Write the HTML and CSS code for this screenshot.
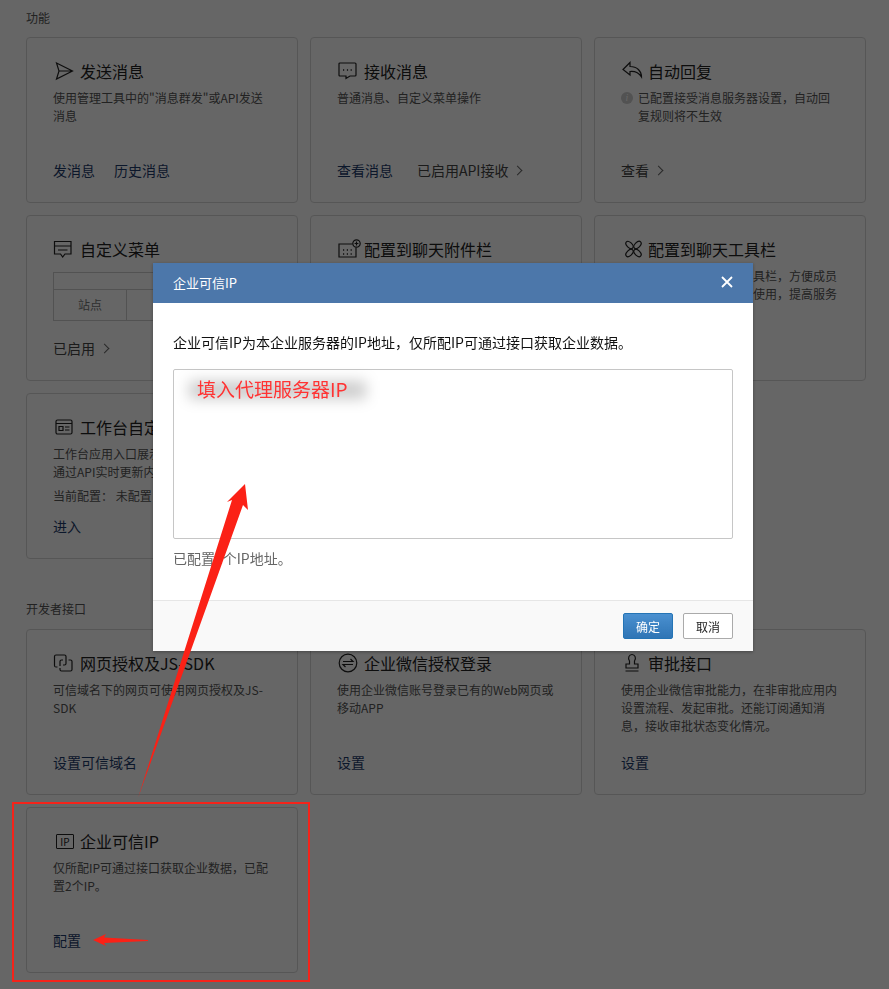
FILE: index.html
```html
<!DOCTYPE html>
<html lang="zh-CN">
<head>
    <meta charset="UTF-8">
    <meta name="viewport" content="width=device-width, initial-scale=1.0">
    <title>企业可信IP</title>
    <link rel="stylesheet" href="styles.css">
</head>
<body>
    <main class="page">
        <h3 class="section-title">功能</h3>
        <div class="card-grid">
            <section class="card">
                <h4 class="card-title">
                    <svg class="card-icon" viewBox="0 0 20 20"><path d="M2.5 2 L18.5 10 L2.5 18 L5 10 Z M5 10 H18.5"/></svg>
                    发送消息
                </h4>
                <p class="card-desc">使用管理工具中的"消息群发"或API发送消息</p>
                <div class="card-links"><a href="#">发消息</a><a href="#">历史消息</a></div>
            </section>
            <section class="card">
                <h4 class="card-title">
                    <svg class="card-icon" viewBox="0 0 20 20"><path d="M1 3 Q1 2 2 2 H17 Q18 2 18 3 V14 Q18 15 17 15 H12 L8 17.5 V15 H2 Q1 15 1 14 Z"/><path class="dots" d="M5 9 h1.2 M8.9 9 h1.2 M12.6 9 h1.2"/></svg>
                    接收消息
                </h4>
                <p class="card-desc">普通消息、自定义菜单操作</p>
                <div class="card-links wide"><a href="#">查看消息</a><a href="#" class="muted">已启用API接收<span class="chevron"></span></a></div>
            </section>
            <section class="card">
                <h4 class="card-title">
                    <svg class="card-icon" viewBox="0 0 20 20"><path d="M8 1.5 L1 8.5 L8 14 V10.5 C13 10 17 12 19.5 16 C19.5 10 15 5.5 8 5.5 Z"/></svg>
                    自动回复
                </h4>
                <p class="card-desc has-info"><i class="info">i</i>已配置接受消息服务器设置，自动回复规则将不生效</p>
                <div class="card-links"><a href="#" class="muted">查看<span class="chevron"></span></a></div>
            </section>

            <section class="card">
                <h4 class="card-title">
                    <svg class="card-icon" viewBox="0 0 20 20"><path d="M0.5 2.5 H17 V15 H11 L8.7 18 L6.5 15 H0.5 Z M0.5 7 H17 M4 11 H13.5"/></svg>
                    自定义菜单
                </h4>
                <div class="menu-preview">
                    <div class="menu-top"></div>
                    <div class="menu-row"><span>站点</span><span></span><span></span></div>
                </div>
                <div class="card-links"><a href="#" class="muted">已启用<span class="chevron"></span></a></div>
            </section>
            <section class="card">
                <h4 class="card-title">
                    <svg class="card-icon" viewBox="0 0 20 20"><path d="M14.5 5 H1 V18 H18 V8.5"/><circle cx="18.5" cy="4.5" r="3.7"/><path d="M16.6 4.5 H20.4 M18.5 2.6 V6.4"/><path class="dots" d="M5 11 h1.2 M8.8 11 h1.2 M12.6 11 h1.2 M5 15 h1.2 M8.8 15 h1.2 M12.6 15 h1.2"/></svg>
                    配置到聊天附件栏
                </h4>
            </section>
            <section class="card">
                <h4 class="card-title">
                    <svg class="card-icon" viewBox="0 0 20 20">
                        <ellipse cx="7.5" cy="6" rx="4.4" ry="2.6" transform="rotate(45 7.5 6)"/>
                        <ellipse cx="15.5" cy="6" rx="4.4" ry="2.6" transform="rotate(-45 15.5 6)"/>
                        <ellipse cx="7.5" cy="14" rx="4.4" ry="2.6" transform="rotate(-45 7.5 14)"/>
                        <ellipse cx="15.5" cy="14" rx="4.4" ry="2.6" transform="rotate(45 15.5 14)"/>
                    </svg>
                    配置到聊天工具栏
                </h4>
                <p class="card-desc">可以将应用配置到聊天工具栏，方便成员在聊天过程中快捷进入和使用，提高服务</p>
            </section>

            <section class="card">
                <h4 class="card-title">
                    <svg class="card-icon" viewBox="0 0 20 20"><rect x="2" y="3" width="16" height="14" rx="1.5"/><path d="M2 6.5 H18 M5 9.5 H9 V13.5 H5 Z M11 10 H15.5 M11 13 H15.5"/></svg>
                    工作台自定义展示
                </h4>
                <p class="card-desc">工作台应用入口展示应用的关键数据，可通过API实时更新内容</p>
                <p class="card-desc config-line">当前配置： 未配置</p>
                <div class="card-links"><a href="#">进入</a></div>
            </section>
        </div>

        <h3 class="section-title section-second">开发者接口</h3>
        <div class="card-grid">
            <section class="card">
                <h4 class="card-title">
                    <svg class="card-icon" viewBox="0 0 20 20"><path d="M3.5 14 H2 Q0.5 14 0.5 12.5 V3.5 Q0.5 2 2 2 H10.5 Q12 2 12 3.5 V10.5 Q12 12 10.5 12 H9"/><path d="M6 13 V8.5 Q6 7 7.5 7 H9 M14.5 7 H16.5 Q18 7 18 8.5 V16.5 Q18 18 16.5 18 H7.5 Q6 18 6 16.5 V15"/></svg>
                    网页授权及JS-SDK
                </h4>
                <p class="card-desc">可信域名下的网页可使用网页授权及JS-SDK</p>
                <div class="card-links"><a href="#">设置可信域名</a></div>
            </section>
            <section class="card">
                <h4 class="card-title">
                    <svg class="card-icon" viewBox="0 0 20 20"><circle cx="10" cy="10" r="8.8"/><path d="M5 8.5 H15 L12.5 6 M15 11.5 H5 L7.5 14"/></svg>
                    企业微信授权登录
                </h4>
                <p class="card-desc">使用企业微信账号登录已有的Web网页或移动APP</p>
                <div class="card-links"><a href="#">设置</a></div>
            </section>
            <section class="card">
                <h4 class="card-title">
                    <svg class="card-icon" viewBox="0 0 20 20"><path d="M7.5 11 V8 C5.5 5 7 1.5 10 1.5 C13 1.5 14.5 5 12.5 8 V11 H16 V15 H4 V11 Z M3.5 18 H16.5"/></svg>
                    审批接口
                </h4>
                <p class="card-desc">使用企业微信审批能力，在非审批应用内设置流程、发起审批。还能订阅通知消息，接收审批状态变化情况。</p>
                <div class="card-links"><a href="#">设置</a></div>
            </section>

            <section class="card">
                <h4 class="card-title">
                    <span class="ip-icon">IP</span>
                    企业可信IP
                </h4>
                <p class="card-desc">仅所配IP可通过接口获取企业数据，已配置2个IP。</p>
                <div class="card-links"><a href="#">配置</a></div>
            </section>
        </div>
    </main>

    <div class="mask"></div>

    <div class="dialog">
        <div class="dialog-header">
            <span>企业可信IP</span>
            <svg class="dialog-close" viewBox="0 0 12 12"><path d="M1 1 L11 11 M11 1 L1 11"/></svg>
        </div>
        <div class="dialog-body">
            <p class="dialog-intro">企业可信IP为本企业服务器的IP地址，仅所配IP可通过接口获取企业数据。</p>
            <div class="ip-input"><span class="ip-note">填入代理服务器IP</span></div>
            <p class="dialog-count">已配置2个IP地址。</p>
        </div>
        <div class="dialog-footer">
            <button class="btn btn-primary">确定</button>
            <button class="btn">取消</button>
        </div>
    </div>

    <!-- red annotations drawn on top of the screenshot -->
    <div class="mark-box"></div>
    <svg class="marks" viewBox="0 0 889 989">
        <polygon points="245,484 248,510 243,505 138,798 232,500 227,502"/>
        <polygon points="93,940 106,934 104,937.5 148,940 148,941 104,943 106,946"/>
    </svg>
</body>
</html>
```

FILE: styles.css
```css
* {
    margin: 0;
    padding: 0;
    box-sizing: border-box;
}

body {
    background-color: #fff;
    font-family: "Noto Sans CJK SC", "Liberation Sans", sans-serif;
    font-size: 12px;
    color: #333;
    height: 989px;
    overflow: hidden;
}

.page {
    padding: 9px 23px 0 26px;
}

.section-title {
    font-size: 12px;
    font-weight: normal;
    line-height: 18px;
    color: #555;
    margin-bottom: 10px;
}

.section-second {
    margin-top: 41px;
    margin-bottom: 11px;
}

.card-grid {
    display: grid;
    grid-template-columns: repeat(3, 272px);
    grid-auto-rows: 166px;
    gap: 12px;
}

.card {
    border: 1px solid #d8d8d8;
    border-radius: 4px;
    padding: 22px 26px 0;
    position: relative;
}

.card-title {
    display: flex;
    align-items: center;
    font-size: 16px;
    font-weight: normal;
    line-height: 22px;
    color: #222;
    gap: 6px;
    margin-bottom: 7px;
}

.card-icon {
    width: 20px;
    height: 20px;
    margin-left: 1px;
    fill: none;
    stroke: #222;
    stroke-width: 1.2;
    flex-shrink: 0;
    overflow: visible;
}

.card-icon .dots {
    stroke-width: 1.6;
}

.ip-icon {
    width: 18px;
    height: 15px;
    margin: 0 0 0 3px;
    border: 1px solid #222;
    border-radius: 1px;
    font-size: 10px;
    line-height: 13px;
    text-align: center;
    flex-shrink: 0;
}

.card-desc {
    font-size: 12px;
    line-height: 18px;
    color: #555;
}

.config-line {
    margin-top: 6px;
}

.has-info {
    padding-left: 17px;
    position: relative;
}

.info {
    position: absolute;
    left: 0;
    top: 3px;
    width: 12px;
    height: 12px;
    border-radius: 50%;
    background-color: #ccc;
    color: #fff;
    font-family: "Liberation Serif", serif;
    font-size: 10px;
    line-height: 12px;
    text-align: center;
}

.card-links {
    position: absolute;
    left: 26px;
    bottom: 22px;
    display: flex;
    gap: 19px;
    font-size: 14px;
    line-height: 20px;
}

.card-links.wide {
    gap: 24px;
}

.card-links a {
    color: #1d3b6b;
    text-decoration: none;
}

.card-links a.muted {
    color: #444;
}

.chevron {
    display: inline-block;
    width: 7px;
    height: 7px;
    margin-left: 6px;
    border-top: 1px solid #666;
    border-right: 1px solid #666;
    transform: rotate(45deg);
    vertical-align: 2px;
}

.menu-preview {
    border: 1px solid #ccc;
    margin-top: 12px;
    height: 49px;
}

.menu-top {
    height: 17px;
    border-bottom: 1px solid #ccc;
}

.menu-row {
    display: grid;
    grid-template-columns: 73px 73px 1fr;
    height: 30px;
}

.menu-row span {
    border-right: 1px solid #ccc;
    font-size: 12px;
    line-height: 30px;
    text-align: center;
    color: #777;
}

.mask {
    position: fixed;
    inset: 0;
    background-color: rgba(0, 0, 0, 0.6);
}

.dialog {
    position: absolute;
    left: 153px;
    top: 263px;
    width: 600px;
    height: 388px;
    background-color: #fff;
    display: flex;
    flex-direction: column;
    box-shadow: 0 1px 3px rgba(0, 0, 0, 0.3);
}

.dialog-header {
    height: 40px;
    background-color: #4c77aa;
    padding: 0 20px 2px;
    display: flex;
    align-items: center;
    justify-content: space-between;
    color: #fff;
    font-size: 13px;
}

.dialog-close {
    width: 12px;
    height: 12px;
    fill: none;
    stroke: #fff;
    stroke-width: 1.8;
}

.dialog-body {
    flex: 1;
    padding: 29px 20px 0;
}

.dialog-intro {
    font-size: 14px;
    line-height: 20px;
    color: #111;
}

.ip-input {
    margin-top: 17px;
    height: 170px;
    border: 1px solid #c6c6c6;
    border-radius: 2px;
    padding: 5px 23px;
}

.ip-note {
    display: inline-block;
    position: relative;
    z-index: 0;
    font-size: 19px;
    line-height: 28px;
    color: #f33;
}

.ip-note::before {
    content: "";
    position: absolute;
    z-index: -1;
    left: -8px;
    right: -18px;
    top: 6px;
    bottom: 4px;
    background-color: rgba(0, 0, 0, 0.2);
    filter: blur(7px);
}

.dialog-count {
    margin-top: 10px;
    font-size: 14px;
    line-height: 18px;
    color: #666;
}

.dialog-footer {
    height: 51px;
    background-color: #f9f9f9;
    border-top: 1px solid #e6e6e6;
    padding: 12px 20px 0;
    display: flex;
    justify-content: flex-end;
    gap: 10px;
}

.btn {
    width: 50px;
    height: 26px;
    border: 1px solid #aaa;
    border-radius: 2px;
    background-color: #fff;
    color: #222;
    font-family: inherit;
    font-size: 12px;
}

.btn-primary {
    border-color: #2474b5;
    background: linear-gradient(#4a90d0, #2f75b5);
    color: #fff;
}

.mark-box {
    position: absolute;
    left: 12px;
    top: 802px;
    width: 298px;
    height: 180px;
    border: 2px solid #f5231a;
}

.marks {
    position: absolute;
    left: 0;
    top: 0;
    width: 889px;
    height: 989px;
    fill: #fb2116;
}
```
